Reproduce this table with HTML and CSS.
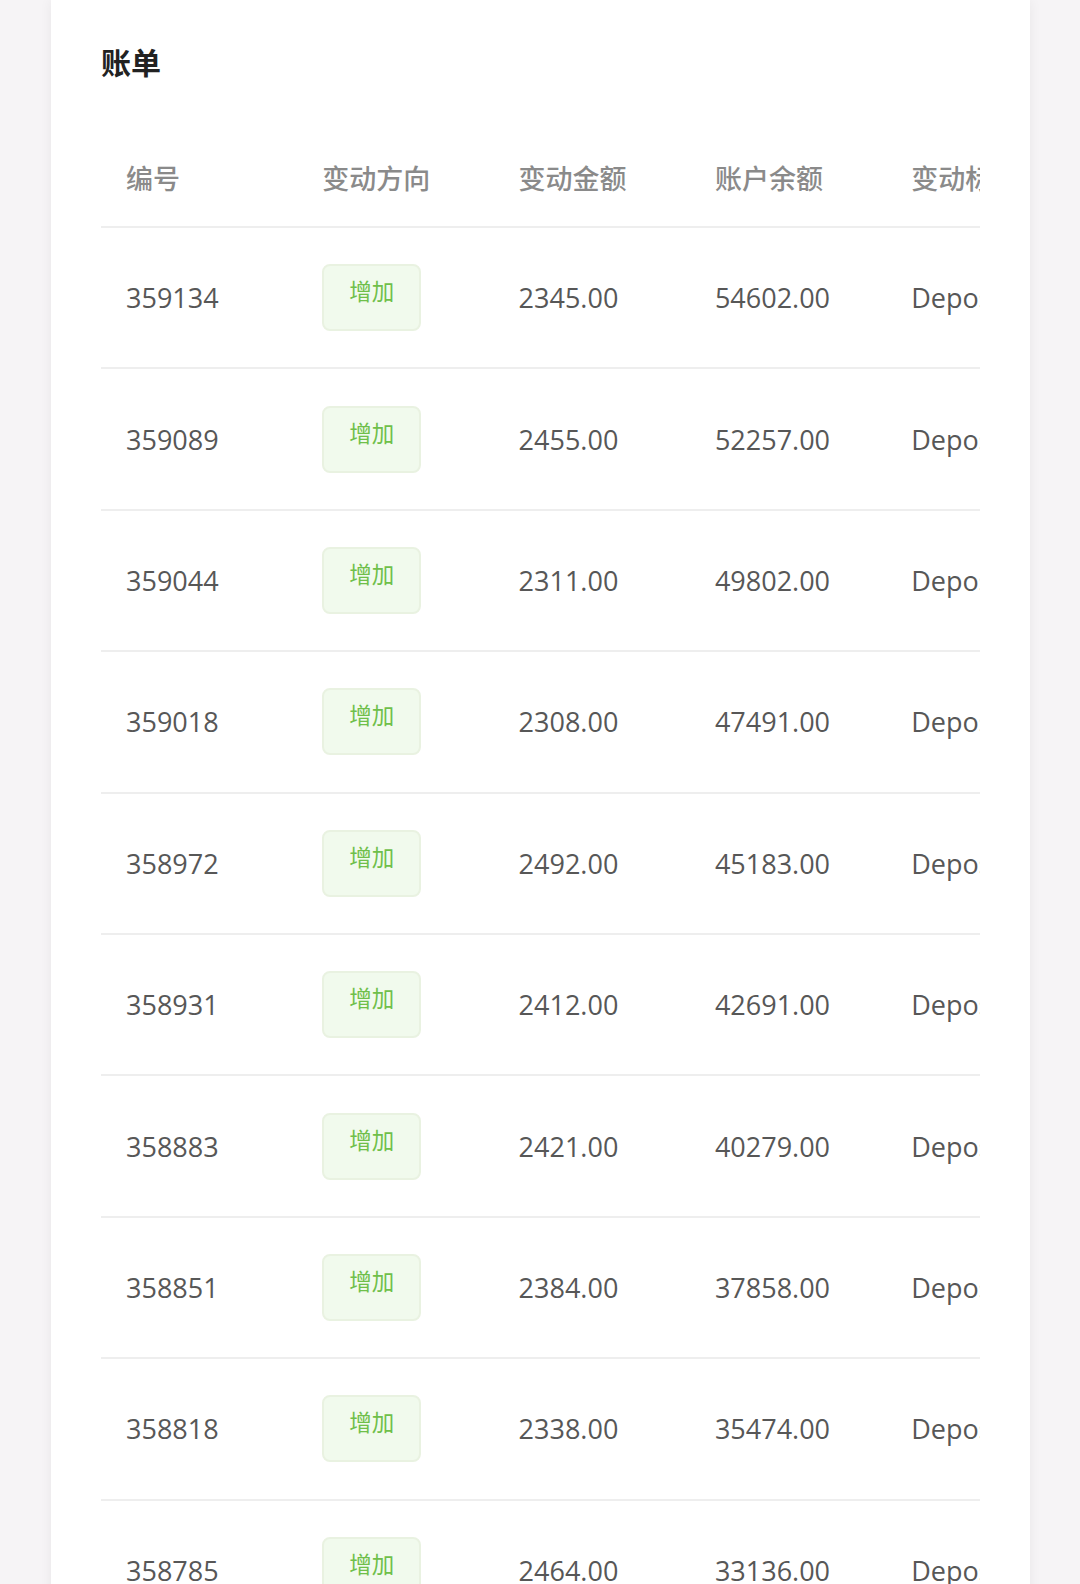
FILE: index.html
```html
<!DOCTYPE html>
<html lang="zh">
<head>
<meta charset="utf-8">
<link rel="stylesheet" href="styles.css">
</head>
<body>
<div class="card">
  <h1 class="title">账单</h1>
  <div class="table-wrap">
    <div class="table">
      <div class="row head">
        <div class="cell">编号</div>
        <div class="cell">变动方向</div>
        <div class="cell">变动金额</div>
        <div class="cell">账户余额</div>
        <div class="cell">变动标识</div>
      </div>
      <div class="row"><div class="cell">359134</div><div class="cell"><span class="tag">增加</span></div><div class="cell">2345.00</div><div class="cell">54602.00</div><div class="cell">Deposit</div></div>
      <div class="row"><div class="cell">359089</div><div class="cell"><span class="tag">增加</span></div><div class="cell">2455.00</div><div class="cell">52257.00</div><div class="cell">Deposit</div></div>
      <div class="row"><div class="cell">359044</div><div class="cell"><span class="tag">增加</span></div><div class="cell">2311.00</div><div class="cell">49802.00</div><div class="cell">Deposit</div></div>
      <div class="row"><div class="cell">359018</div><div class="cell"><span class="tag">增加</span></div><div class="cell">2308.00</div><div class="cell">47491.00</div><div class="cell">Deposit</div></div>
      <div class="row"><div class="cell">358972</div><div class="cell"><span class="tag">增加</span></div><div class="cell">2492.00</div><div class="cell">45183.00</div><div class="cell">Deposit</div></div>
      <div class="row"><div class="cell">358931</div><div class="cell"><span class="tag">增加</span></div><div class="cell">2412.00</div><div class="cell">42691.00</div><div class="cell">Deposit</div></div>
      <div class="row"><div class="cell">358883</div><div class="cell"><span class="tag">增加</span></div><div class="cell">2421.00</div><div class="cell">40279.00</div><div class="cell">Deposit</div></div>
      <div class="row"><div class="cell">358851</div><div class="cell"><span class="tag">增加</span></div><div class="cell">2384.00</div><div class="cell">37858.00</div><div class="cell">Deposit</div></div>
      <div class="row"><div class="cell">358818</div><div class="cell"><span class="tag">增加</span></div><div class="cell">2338.00</div><div class="cell">35474.00</div><div class="cell">Deposit</div></div>
      <div class="row"><div class="cell">358785</div><div class="cell"><span class="tag">增加</span></div><div class="cell">2464.00</div><div class="cell">33136.00</div><div class="cell">Deposit</div></div>
    </div>
  </div>
</div>
</body>
</html>
```

FILE: styles.css
```css
html, body {
  margin: 0;
  padding: 0;
}
body {
  background: #f6f4f6;
  font-family: "Open Sans", "Noto Sans CJK SC", sans-serif;
  height: 1584px;
  overflow: hidden;
}
.card {
  margin: 0 50px 0 51px;
  background: #ffffff;
  padding: 41px 49px 0 50px;
  box-shadow: 0 0 12px rgba(0, 0, 0, 0.06);
  min-height: 1600px;
}
.title {
  margin: 0;
  font-family: "Noto Sans CJK SC", sans-serif;
  font-size: 30px;
  line-height: 40px;
  font-weight: 700;
  color: #222222;
}
.table-wrap {
  margin-top: 48px;
  width: 879px;
  overflow: hidden;
}
.table {
  width: 1178px;
}
.row {
  display: grid;
  grid-template-columns: repeat(6, 196.3px);
  box-sizing: border-box;
  height: 141.4px;
  align-items: center;
  border-bottom: 2px solid #eeeeee;
}
.row.head {
  height: 99px;
}
.cell {
  padding-left: 25px;
  font-size: 27px;
  color: #575757;
  white-space: nowrap;
}
.head .cell {
  font-family: "Noto Sans CJK SC", sans-serif;
  font-weight: 500;
  color: #8a8a8a;
  font-size: 27px;
}
.tag {
  display: inline-block;
  box-sizing: border-box;
  width: 99px;
  height: 67px;
  padding-top: 9px;
  text-align: center;
  font-family: "Noto Sans CJK SC", sans-serif;
  font-size: 22.5px;
  line-height: 30px;
  color: #6fbf4a;
  background: #f1faed;
  border: 2px solid #e9f2e1;
  border-radius: 8px;
  vertical-align: middle;
}
```
